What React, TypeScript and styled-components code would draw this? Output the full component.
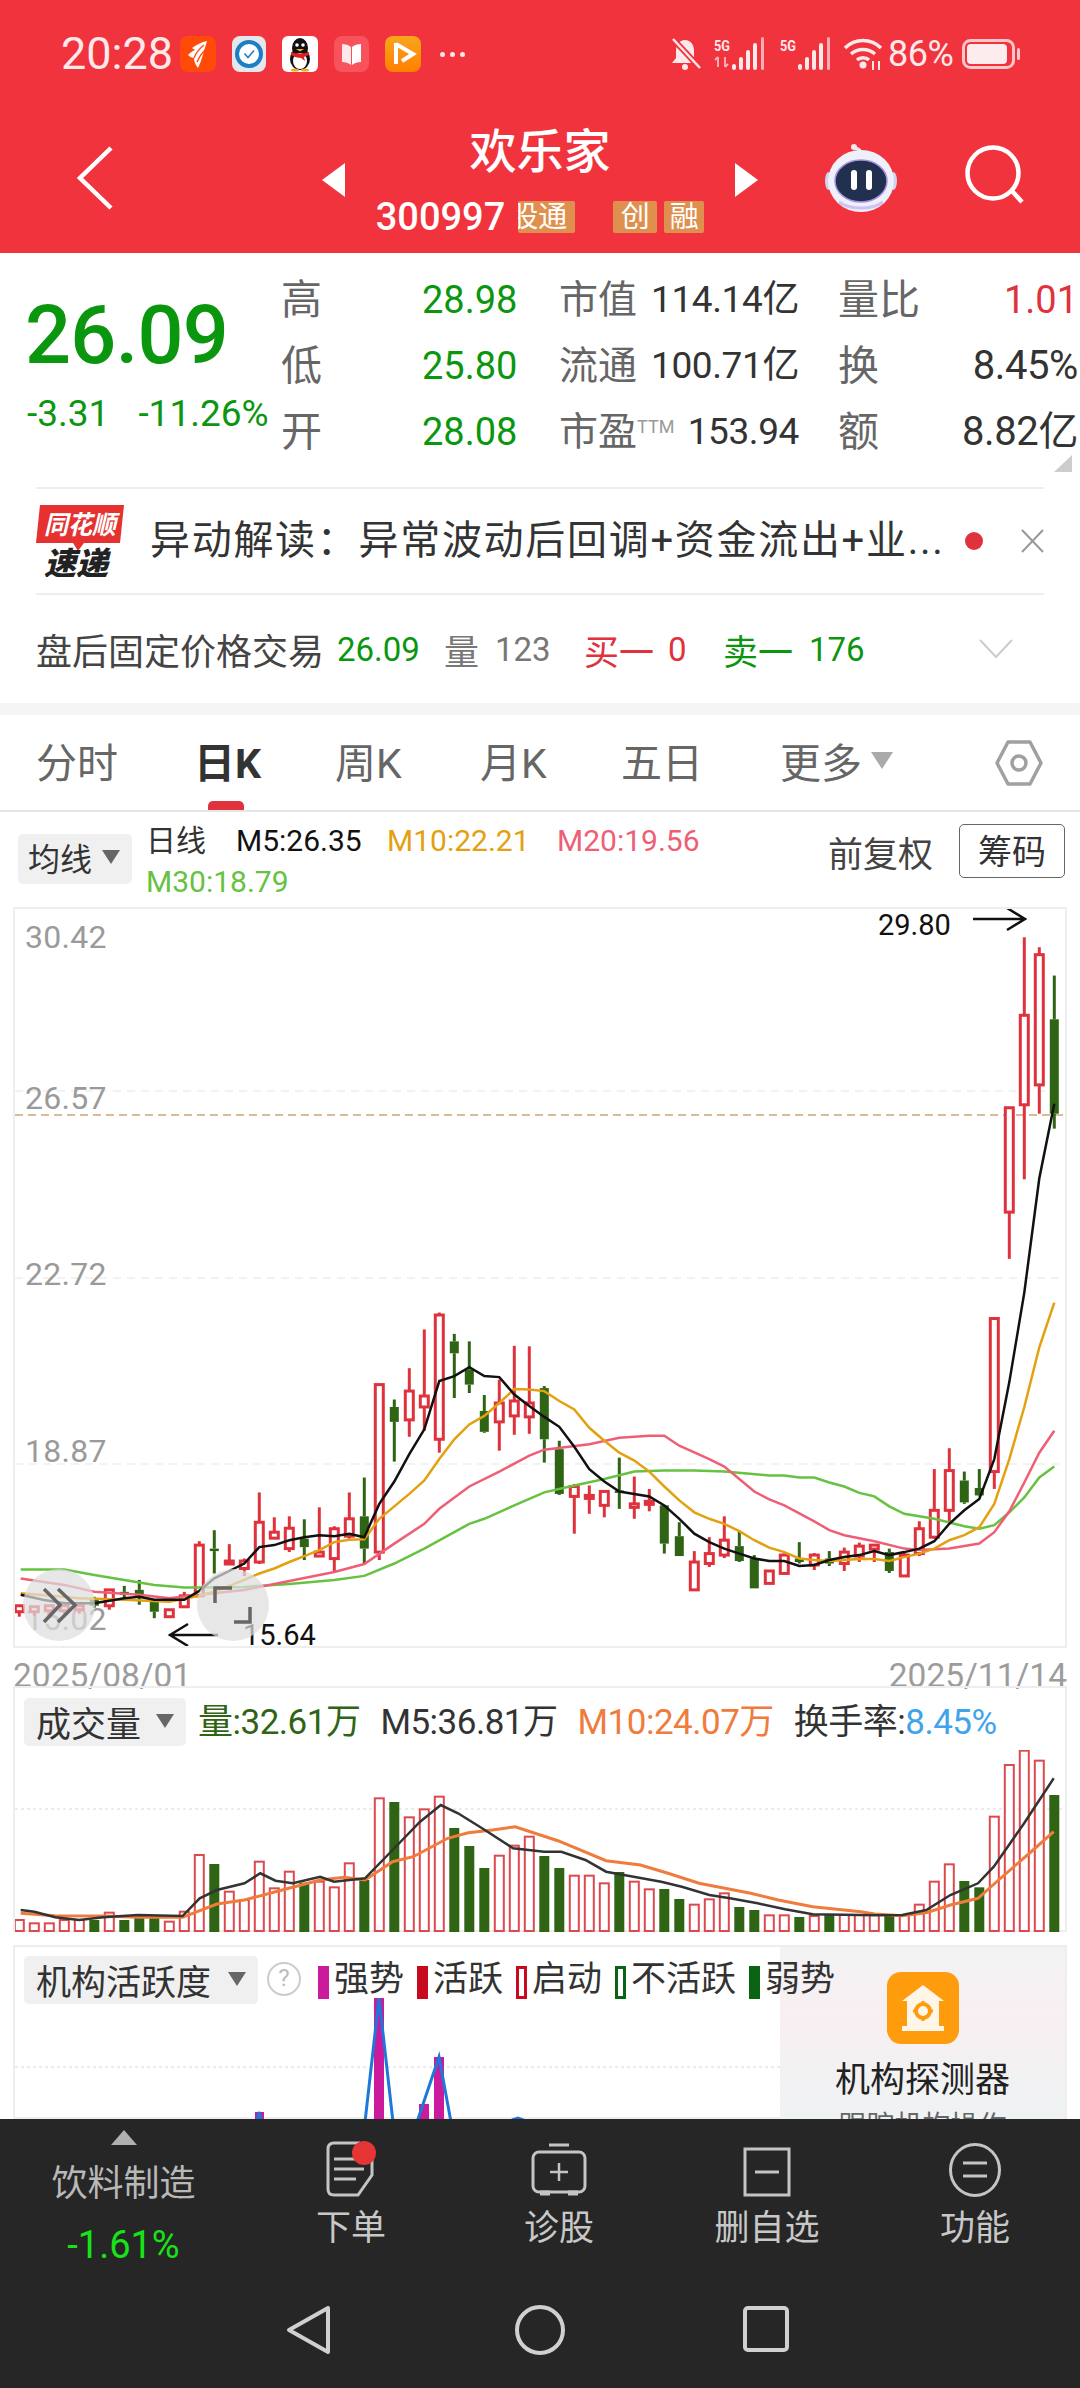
import styled, { createGlobalStyle } from 'styled-components';

const FONT = 'Roboto, "Noto Sans CJK SC", "Noto Sans", sans-serif';
const RED = '#F1333D';
const UP = '#E0323C';
const DOWN = '#0B960F';
const CANDLE_GREEN = '#2F6414';

const GlobalStyle = createGlobalStyle`
    html, body { margin: 0; padding: 0; background: #fff; }
    * { box-sizing: border-box; }
`;

const Page = styled.div`
    width: 1080px;
    height: 2388px;
    overflow: hidden;
    display: flex;
    flex-direction: column;
    font-family: ${FONT};
    background: #fff;
    color: #333;
`;

/* ---------- red header ---------- */
const Header = styled.header`
    height: 253px;
    flex: none;
    background: ${RED};
    color: #fff;
`;

const StatusBar = styled.div`
    height: 108px;
    padding: 36px 0 0 61px;
    display: flex;
    align-items: flex-start;
`;

const Clock = styled.div`
    width: 119px;
    height: 36px;
    font-size: 45px;
    line-height: 36px;
    color: #fde8ea;
`;

const AppIcons = styled.div`
    display: flex;
    gap: 16px;
`;

const MoreDots = styled.div`
    width: 25px;
    margin: 16px 0 0 19px;
    display: flex;
    justify-content: space-between;
    span {
        width: 5px;
        height: 5px;
        border-radius: 50%;
        background: #fde8ea;
    }
`;

const StatusRight = styled.div`
    margin-left: 203px;
    display: flex;
    align-items: center;
    height: 36px;
`;

const Spacer = styled.div<{ $w: number }>`
    width: ${p => p.$w}px;
    flex: none;
`;

const Battery = styled.div`
    font-size: 36px;
    line-height: 36px;
    letter-spacing: -0.5px;
    color: #fde8ea;
    margin: 0 9px 0 5px;
`;

const NavBar = styled.div`
    height: 145px;
    display: grid;
    grid-template-columns: 322px 436px 1fr;
`;

const BackCell = styled.div`
    padding: 38px 0 0 77px;
`;

const Switcher = styled.div`
    display: flex;
    justify-content: space-between;
    align-items: flex-start;
`;

const Arrow = styled.div<{ $dir: 'left' | 'right' }>`
    width: 0;
    height: 0;
    margin-top: 55px;
    border-top: 17px solid transparent;
    border-bottom: 17px solid transparent;
    border-${p => p.$dir === 'left' ? 'right' : 'left'}: 23px solid #fff;
`;

const StockInfo = styled.div`
    display: flex;
    flex-direction: column;
    align-items: center;
`;

const StockName = styled.div`
    height: 90px;
    padding-top: 20px;
    font-size: 47px;
    line-height: 48px;
    font-weight: 500;
`;

const CodeRow = styled.div`
    display: flex;
    align-items: center;
    margin-top: 3px;
    height: 32px;
`;

const Code = styled.div`
    font-size: 38px;
    line-height: 32px;
    font-weight: 500;
    margin-right: 13px;
`;

const Badge = styled.div<{ $w: number; $mr: number }>`
    width: ${p => p.$w}px;
    margin-right: ${p => p.$mr}px;
    height: 32px;
    background: #E0904E;
    border-radius: 2px;
    color: #fff;
    font-size: 29px;
    line-height: 32px;
    display: flex;
    justify-content: center;
    overflow: hidden;
    white-space: nowrap;
`;

// the first character runs off the tag in the app as well
const ClippedBadge = styled(Badge)`
    justify-content: flex-end;
    padding-right: 8px;
    span {
        flex: none;
    }
`;

const NavTools = styled.div`
    padding: 36px 0 0 67px;
    display: flex;
    align-items: flex-start;
    gap: 68px;
`;

/* ---------- quote block ---------- */
const Quote = styled.section`
    position: relative;
    height: 234px;
    flex: none;
    display: flex;
`;

const PriceBlock = styled.div`
    width: 281px;
    flex: none;
    padding: 41px 0 0 25px;
`;

const LastPrice = styled.div`
    font-size: 81px;
    line-height: 84px;
    font-weight: 500;
    color: ${DOWN};
    letter-spacing: -0.7px;
`;

const ChangeRow = styled.div`
    margin-top: 16px;
    padding-left: 2px;
    display: flex;
    gap: 29px;
    font-size: 37px;
    line-height: 40px;
    color: ${DOWN};
    white-space: nowrap;
`;

const QuoteGrid = styled.div`
    margin-top: 14px;
    display: grid;
    grid-template-columns: 141px 137px 279px 242px;
    grid-auto-rows: 66px;
    width: 799px;
    align-items: center;
`;

const QLabel = styled.div`
    font-size: 41px;
    line-height: 48px;
    color: #666;
`;

const QValue = styled.div<{ $color: string }>`
    font-size: 38px;
    line-height: 48px;
    color: ${p => p.$color};
`;

const QPair = styled.div`
    display: flex;
    justify-content: space-between;
    align-items: center;
    padding-right: 39px;
`;

const QShort = styled.div`
    font-size: 39px;
    line-height: 48px;
    color: #666;
    white-space: nowrap;
    sup {
        font-size: 18px;
        color: #999;
        vertical-align: 12px;
        line-height: 0;
    }
`;

const QMid = styled.div`
    font-size: 37px;
    line-height: 48px;
    color: #333;
    letter-spacing: -0.4px;
    white-space: nowrap;
`;

const QBig = styled(QMid)`
    font-size: 40px;
`;

const QEnd = styled(QPair)`
    padding-right: 2px;
`;

const Corner = styled.div`
    position: absolute;
    right: 8px;
    top: 202px;
    width: 0;
    height: 0;
    border-left: 18px solid transparent;
    border-bottom: 17px solid #ccc;
`;

const NewsRow = styled.div`
    height: 108px;
    flex: none;
    margin: 0 36px;
    border-top: 2px solid #eee;
    border-bottom: 2px solid #eee;
    display: flex;
    align-items: center;
`;

const LogoSvg = styled.svg`
    flex: none;
`;

const NewsText = styled.div`
    margin-left: 26px;
    width: 799px;
    flex: none;
    font-size: 40px;
    line-height: 48px;
    color: #333;
    white-space: nowrap;
    letter-spacing: 1.7px;
`;

const NewsDot = styled.div`
    width: 18px;
    height: 18px;
    border-radius: 50%;
    background: ${UP};
    margin-left: 16px;
    flex: none;
`;

const NewsClose = styled.div`
    margin-left: 38px;
    display: flex;
`;

const AfterRow = styled.div`
    height: 108px;
    flex: none;
    padding-left: 36px;
    display: flex;
    align-items: center;
`;

const AfterItem = styled.span<{ $color: string; $w: number; $size?: number }>`
    color: ${p => p.$color};
    width: ${p => p.$w}px;
    font-size: ${p => p.$size ?? 35}px;
    flex: none;
    white-space: nowrap;
`;

const ChevronSvg = styled.svg`
    flex: none;
`;

const Gap = styled.div`
    height: 12px;
    flex: none;
    background: #f5f5f5;
`;

/* ---------- period tabs ---------- */
const Tabs = styled.nav`
    height: 97px;
    flex: none;
    padding-left: 36px;
    border-bottom: 2px solid #e6e6e6;
    display: grid;
    grid-template-columns: 158px 141px 145px 141px 159px 215px 48px;
    align-items: center;
`;

const Tab = styled.div<{ $active?: boolean }>`
    position: relative;
    height: 95px;
    padding-bottom: 5px;
    display: flex;
    align-items: center;
    font-size: 41px;
    gap: 9px;
    color: ${p => (p.$active ? '#333' : '#666')};
    font-weight: ${p => (p.$active ? 700 : 400)};
`;

const TabMark = styled.div`
    position: absolute;
    left: 14px;
    bottom: 0;
    width: 36px;
    height: 9px;
    border-radius: 5px 5px 0 0;
    background: ${UP};
`;

const Caret = styled.div<{ $color: string; $w: number; $h: number }>`
    flex: none;
    width: 0;
    height: 0;
    border-left: ${p => p.$w / 2}px solid transparent;
    border-right: ${p => p.$w / 2}px solid transparent;
    border-top: ${p => p.$h}px solid ${p => p.$color};
`;

/* ---------- k line ---------- */
const Main = styled.main`
    flex: 1;
    min-height: 0;
    overflow: hidden;
`;

const ChartBar = styled.div`
    height: 95px;
    padding: 0 13px 0 18px;
    display: flex;
    align-items: flex-start;
`;

const Pill = styled.div<{ $w: number }>`
    flex: none;
    width: ${p => p.$w}px;
    height: 48px;
    border-radius: 5px;
    background: #f0f0f0;
    padding: 0 12px 2px;
    display: flex;
    align-items: center;
    justify-content: space-between;
    font-size: 35px;
    color: #333;
    white-space: nowrap;
`;

const MaPill = styled(Pill)`
    margin-top: 22px;
    height: 50px;
    font-size: 32px;
    padding-left: 10px;
    padding-bottom: 4px;
`;

const MaValues = styled.div`
    width: 600px;
    margin: 8px 0 0 14px;
    display: flex;
    flex-wrap: wrap;
    font-size: 30px;
    line-height: 41px;
    white-space: nowrap;
`;

const MaText = styled.span<{ $color: string; $w?: number }>`
    color: ${p => p.$color};
    ${p => (p.$w ? `width: ${p.$w}px;` : '')}
`;

const Adjust = styled.div`
    margin: 24px 0 0 82px;
    font-size: 35px;
    line-height: 40px;
    color: #444;
    white-space: nowrap;
`;

const ChipButton = styled.div`
    margin: 12px 0 0 26px;
    width: 106px;
    height: 54px;
    border: 1.5px solid #666;
    border-radius: 5px;
    font-size: 34px;
    line-height: 54px;
    text-align: center;
    color: #333;
`;

const Frame = styled.div<{ $h: number; $mt?: number }>`
    position: relative;
    margin: ${p => p.$mt ?? 0}px 13px 0;
    height: ${p => p.$h}px;
    border: 2px solid #eee;
`;

const PlotSvg = styled.svg`
    display: block;
`;

const Float = styled.div<{ $left: number }>`
    position: absolute;
    left: ${p => p.$left}px;
    top: 660px;
    width: 72px;
    height: 72px;
    border-radius: 50%;
    background: rgba(222, 222, 222, 0.72);
`;

const DateRow = styled.div`
    height: 38px;
    padding: 15px 13px 0;
    display: flex;
    justify-content: space-between;
    align-items: flex-start;
    font-size: 33.5px;
    line-height: 26px;
    color: #9c9c9c;
`;

const VolHead = styled.div`
    height: 62px;
    padding: 10px 0 0 9px;
    display: flex;
    align-items: flex-start;
    gap: 12px;
`;

const VolValues = styled.div`
    margin-top: 3px;
    display: flex;
    gap: 20px;
    font-size: 35px;
    line-height: 44px;
    white-space: nowrap;
    letter-spacing: -0.5px;
`;

const ActivityBody = styled.div`
    display: flex;
    height: 174px;
`;

const ActivityLeft = styled.div`
    width: 765px;
    flex: none;
`;

const ActivityHead = styled.div`
    position: relative;
    z-index: 1;
    height: 51px;
    padding: 9px 0 0 9px;
    display: flex;
    align-items: flex-start;
`;

const Help = styled.div`
    flex: none;
    width: 34px;
    height: 34px;
    margin: 6px 0 0 9px;
    border: 2.5px solid #ccc;
    border-radius: 50%;
    color: #bbb;
    font-size: 24px;
    line-height: 29px;
    text-align: center;
`;

const Legend = styled.div`
    margin-left: 17px;
    display: flex;
    font-size: 35px;
    line-height: 40px;
    white-space: nowrap;
    color: #333;
`;

const LegendItem = styled.div`
    display: flex;
    align-items: center;
    gap: 5px;
    margin-right: 13px;
    height: 48px;
`;

const Swatch = styled.i<{ $color: string; $hollow?: boolean }>`
    display: block;
    width: 11px;
    height: 33px;
    margin-top: 4px;
    background: ${p => (p.$hollow ? '#fff' : p.$color)};
    border: ${p => (p.$hollow ? `3px solid ${p.$color}` : 'none')};
`;

const DetectorCard = styled.aside`
    flex: 1;
    padding-top: 25px;
    display: flex;
    flex-direction: column;
    align-items: center;
    background: linear-gradient(180deg, #f3f3f3 0%, #f8eff1 40%, #eef3f4 100%);
    > * {
        flex: none;
    }
`;

const DetectorTitle = styled.div`
    margin-top: 14px;
    font-size: 35px;
    line-height: 46px;
    color: #222;
`;

const DetectorSub = styled.div`
    margin-top: 7px;
    font-size: 28px;
    line-height: 32px;
    color: #666;
`;

/* ---------- bottom dock ---------- */
const Dock = styled.footer`
    height: 269px;
    flex: none;
    background: #262626;
    color: #c4c4c4;
`;

const DockGrid = styled.div`
    height: 161px;
    display: grid;
    grid-template-columns: 247px repeat(4, 208px);
`;

const SectorCell = styled.div`
    padding-top: 11px;
    display: flex;
    flex-direction: column;
    align-items: center;
`;

const SectorUp = styled.div`
    width: 0;
    height: 0;
    border-left: 13px solid transparent;
    border-right: 13px solid transparent;
    border-bottom: 15px solid #b0b0b0;
`;

const SectorName = styled.div`
    margin-top: 17px;
    font-size: 36px;
    line-height: 44px;
    color: #b8b8b8;
`;

const SectorChange = styled.div`
    margin-top: 17px;
    font-size: 38px;
    line-height: 44px;
    color: #17e417;
`;

const DockItem = styled.div`
    padding-top: 22px;
    display: flex;
    flex-direction: column;
    align-items: center;
`;

const DockIcon = styled.div`
    height: 56px;
    display: flex;
    align-items: flex-end;
`;

const DockLabel = styled.div`
    margin-top: 10px;
    font-size: 35px;
    line-height: 44px;
    color: #c8c8c8;
`;

const SystemNav = styled.div`
    height: 108px;
    padding: 25px 0 0 286px;
    display: flex;
    align-items: flex-start;
`;

/* ---------- data, measured off the chart ---------- */
// [up?, bodyTop, bodyBottom, wickTop, wickBottom]
type Candle = [number, number, number, number, number];
const CANDLES: Candle[] = [
    [1, 1420, 1432, 1420, 1442], [1, 1422, 1432, 1422, 1440], [1, 1420, 1430, 1420, 1438], [1, 1420, 1430, 1420, 1436],
    [1, 1420, 1428, 1420, 1436], [0, 1405, 1420, 1402, 1424], [1, 1388, 1420, 1388, 1428], [0, 1392, 1398, 1380, 1410],
    [0, 1388, 1404, 1368, 1418], [0, 1412, 1432, 1408, 1445], [1, 1428, 1442, 1428, 1442], [1, 1400, 1422, 1392, 1422],
    [1, 1298, 1400, 1290, 1400], [0, 1305, 1310, 1268, 1355], [1, 1330, 1336, 1296, 1336], [1, 1330, 1345, 1325, 1360],
    [1, 1252, 1332, 1192, 1336], [1, 1272, 1284, 1242, 1284], [1, 1264, 1305, 1240, 1312], [0, 1285, 1302, 1246, 1328],
    [1, 1312, 1320, 1222, 1322], [1, 1265, 1325, 1260, 1350], [1, 1245, 1280, 1192, 1285], [0, 1240, 1305, 1162, 1335],
    [1, 975, 1312, 975, 1328], [0, 1020, 1050, 1005, 1130], [1, 988, 1046, 942, 1080], [1, 998, 1020, 864, 1068],
    [1, 835, 1085, 830, 1112], [0, 888, 912, 873, 1002], [0, 945, 975, 888, 992], [0, 1028, 1070, 996, 1072],
    [1, 1012, 1050, 965, 1108], [1, 1008, 1038, 897, 1076], [1, 1012, 1040, 898, 1074], [0, 982, 1085, 978, 1132],
    [0, 1105, 1195, 1088, 1197], [1, 1180, 1200, 1175, 1275], [1, 1198, 1204, 1178, 1235], [1, 1190, 1218, 1190, 1242],
    [0, 1188, 1193, 1122, 1225], [1, 1215, 1222, 1160, 1245], [1, 1210, 1216, 1185, 1230], [0, 1218, 1295, 1218, 1315],
    [0, 1280, 1320, 1252, 1320], [1, 1332, 1388, 1310, 1390], [1, 1315, 1335, 1282, 1342], [1, 1288, 1318, 1240, 1324],
    [0, 1300, 1330, 1270, 1332], [0, 1325, 1385, 1318, 1385], [1, 1350, 1375, 1350, 1375], [1, 1318, 1355, 1315, 1355],
    [0, 1325, 1332, 1292, 1335], [1, 1318, 1338, 1314, 1348], [0, 1325, 1335, 1310, 1340], [1, 1312, 1335, 1303, 1350],
    [1, 1300, 1320, 1293, 1332], [1, 1298, 1306, 1296, 1332], [0, 1312, 1350, 1305, 1354], [1, 1318, 1360, 1310, 1360],
    [1, 1265, 1315, 1250, 1320], [1, 1228, 1282, 1145, 1285], [1, 1148, 1228, 1103, 1250], [0, 1168, 1212, 1150, 1215],
    [0, 1183, 1198, 1145, 1200], [1, 842, 1150, 842, 1185], [1, 418, 628, 418, 722], [1, 232, 412, 75, 562],
    [1, 110, 372, 95, 430], [0, 240, 430, 152, 460],
];

type Pt = [number, number];
// points of the right half were read with an x origin of 520px, shift them over
const right = (pts: Pt[]): Pt[] => pts.map(([x, y]) => [x + 1456, y]);

const MA5: Pt[] = [
    [58, 1398], [120, 1408], [180, 1415], [264, 1415], [348, 1405], [390, 1402], [432, 1408], [516, 1408], [558, 1390],
    [600, 1365], [642, 1350], [684, 1335], [726, 1302], [768, 1298], [810, 1288], [852, 1282], [894, 1278], [936, 1280],
    [978, 1275], [1020, 1282], [1062, 1215], [1104, 1170], [1146, 1115], [1188, 1065], [1230, 968], [1272, 958],
    [1314, 940], [1356, 958], [1398, 960], [1440, 995], [1482, 1018], [1524, 1040],
    ...right([
        [110, 1060], [152, 1100], [194, 1145], [236, 1170], [278, 1190], [320, 1195], [362, 1200], [404, 1218], [446, 1245],
        [488, 1275], [530, 1292], [572, 1305], [614, 1315], [656, 1325], [698, 1330], [740, 1330], [782, 1340], [824, 1338],
        [866, 1328], [908, 1322], [950, 1318], [992, 1310], [1034, 1318], [1076, 1312], [1118, 1305], [1160, 1290],
        [1202, 1255], [1244, 1228], [1286, 1205], [1328, 1125], [1370, 970], [1412, 790], [1454, 560], [1496, 410],
    ]),
];

const MA10: Pt[] = [
    [58, 1395], [222, 1405], [348, 1408], [474, 1412], [558, 1400], [600, 1392], [642, 1380], [684, 1368], [726, 1355],
    [768, 1345], [810, 1332], [852, 1320], [894, 1308], [936, 1292], [978, 1287], [1020, 1286], [1062, 1245], [1104, 1220],
    [1146, 1195], [1188, 1168], [1230, 1125], [1272, 1085], [1314, 1055], [1356, 1038], [1398, 1012], [1440, 984], [1482, 985],
    ...right([
        [68, 988], [110, 1008], [152, 1025], [194, 1062], [236, 1088], [278, 1112], [320, 1128], [362, 1150], [404, 1180],
        [446, 1208], [488, 1232], [530, 1245], [572, 1255], [614, 1270], [656, 1288], [698, 1303], [740, 1312], [782, 1325],
        [824, 1328], [866, 1330], [908, 1328], [950, 1326], [992, 1326], [1034, 1330], [1076, 1322], [1118, 1315], [1160, 1305],
        [1202, 1288], [1244, 1278], [1286, 1262], [1328, 1215], [1370, 1125], [1412, 1020], [1454, 900], [1496, 810],
    ]),
];

const MA20: Pt[] = [
    [58, 1365], [180, 1378], [264, 1392], [390, 1398], [474, 1405], [558, 1398], [684, 1388], [810, 1370], [936, 1352],
    [1020, 1336], [1104, 1295], [1188, 1255], [1230, 1225], [1314, 1180], [1398, 1150], [1482, 1118],
    ...right([
        [68, 1106], [194, 1095], [278, 1082], [362, 1078], [404, 1078], [446, 1098], [530, 1125], [572, 1140], [614, 1165],
        [656, 1190], [698, 1206], [740, 1218], [824, 1250], [866, 1268], [908, 1278], [992, 1290], [1076, 1305], [1118, 1308],
        [1202, 1305], [1286, 1295], [1328, 1272], [1370, 1230], [1412, 1172], [1454, 1112], [1496, 1068],
    ]),
];

const MA30: Pt[] = [
    [58, 1347], [180, 1347], [264, 1358], [348, 1368], [432, 1378], [516, 1383], [558, 1383], [684, 1382], [810, 1376],
    [936, 1368], [1020, 1360], [1104, 1335], [1188, 1305], [1314, 1255], [1356, 1245], [1440, 1218],
    ...right([
        [68, 1192], [152, 1178], [236, 1165], [320, 1150], [404, 1148], [488, 1148], [572, 1150], [698, 1158], [740, 1158],
        [782, 1162], [824, 1162], [866, 1172], [908, 1180], [950, 1193], [992, 1200], [1034, 1220], [1076, 1235], [1160, 1245],
        [1244, 1260], [1286, 1265], [1328, 1258], [1370, 1232], [1412, 1202], [1454, 1162], [1496, 1140],
    ]),
];

// volume tops; colour comes from the candle of the same day
const VOLUME = [
    720, 730, 730, 720, 720, 720, 698, 720, 705, 705, 725, 695, 525, 552, 635, 660, 545, 625, 575, 608, 605, 622, 550, 600,
    355, 366, 412, 388, 350, 444, 498, 564, 527, 497, 470, 528, 564, 587, 587, 610, 576, 605, 628, 627, 657, 674, 658, 640,
    681, 690, 706, 706, 711, 708, 705, 705, 705, 705, 705, 705, 674, 605, 553, 603, 622, 410, 255, 212, 242, 345,
];

const VOL_M5: Pt[] = [
    [30, 690], [50, 695], [80, 712], [115, 720], [150, 712], [200, 705], [265, 708], [290, 655], [315, 630], [355, 610],
    [378, 580], [400, 602], [425, 610], [465, 590], [485, 605], [530, 595], [570, 510], [610, 425], [640, 375], [665, 400],
    [700, 445], [745, 505], [790, 515], [815, 515], [850, 540], [880, 575], [920, 590], [960, 605], [990, 620], [1030, 645],
    [1060, 655], [1100, 670], [1140, 688], [1180, 703], [1270, 706], [1310, 705], [1345, 690], [1380, 645], [1420, 610],
    [1443, 560], [1487, 430], [1530, 295],
];

const VOL_M10: Pt[] = [
    [30, 700], [80, 707], [150, 708], [200, 712], [265, 712], [315, 672], [355, 660], [400, 635], [465, 600], [500, 592],
    [530, 600], [570, 545], [600, 530], [650, 475], [680, 458], [715, 450], [748, 440], [810, 482], [880, 542], [930, 555],
    [970, 580], [1015, 610], [1090, 640], [1130, 660], [1180, 680], [1250, 695], [1270, 702], [1310, 707], [1345, 698],
    [1380, 675], [1420, 655], [1450, 600], [1500, 510], [1530, 455],
];

const kx = (i: number) => 19.3 + 15 * i;
const ky = (z: number) => 900 + z / 2.012;
const vx = (z: number) => z / 1.452;
const vy = (z: number) => 1680 + z / 3;

const kLine = (pts: Pt[]) => pts.map(([x, y]) => `${(x / 2.8).toFixed(1)},${ky(y).toFixed(1)}`).join(' ');
const vLine = (pts: Pt[]) => pts.map(([x, y]) => `${vx(x).toFixed(1)},${vy(y).toFixed(1)}`).join(' ');

const KChart = () => (
    <PlotSvg width={1050} height={737} viewBox="15 909 1050 737">
        {[1091, 1278, 1464].map(y => (
            <line key={y} x1={15} x2={1065} y1={y} y2={y} stroke="#eee" strokeWidth={1.5} strokeDasharray="8 6" />
        ))}
        <line x1={15} x2={1065} y1={1115} y2={1115} stroke="#C8A878" strokeWidth={1.5} strokeDasharray="8 5" />
        {[['30.42', 948], ['26.57', 1109], ['22.72', 1285], ['18.87', 1462], ['15.02', 1630]].map(([t, y]) => (
            <text key={t} x={25} y={y} fontSize={32} fill="#9a9a9a" fontFamily="Roboto, sans-serif" letterSpacing={0.3}>{t}</text>
        ))}
        {CANDLES.map(([up, bt, bb, wt, wb], i) => {
            const x = kx(i);
            const color = up ? '#E0323C' : CANDLE_GREEN;
            return (
                <g key={i}>
                    <line x1={x} x2={x} y1={ky(wt)} y2={ky(bt)} stroke={color} strokeWidth={3} />
                    <line x1={x} x2={x} y1={ky(bb)} y2={ky(wb)} stroke={color} strokeWidth={3} />
                    {up ? (
                        <rect x={x - 4} y={ky(bt)} width={8} height={ky(bb) - ky(bt)} fill="#fff" stroke={color} strokeWidth={3} />
                    ) : (
                        <rect x={x - 4.5} y={ky(bt)} width={9} height={ky(bb) - ky(bt)} fill={color} />
                    )}
                </g>
            );
        })}
        <polyline points={kLine(MA30)} fill="none" stroke="#66C240" strokeWidth={2.5} />
        <polyline points={kLine(MA20)} fill="none" stroke="#EE5F76" strokeWidth={2.5} />
        <polyline points={kLine(MA10)} fill="none" stroke="#E3A010" strokeWidth={2.5} />
        <polyline points={kLine(MA5)} fill="none" stroke="#111" strokeWidth={2.5} />
        <text x={878} y={935} fontSize={29} fill="#111" fontFamily="Roboto, sans-serif">29.80</text>
        <path d="M973 919H1025M1007 908L1025 919L1007 930" fill="none" stroke="#111" strokeWidth={2.5} />
        <text x={243} y={1645} fontSize={29} fill="#111" fontFamily="Roboto, sans-serif">15.64</text>
        <path d="M218 1635H170M188 1624L170 1635L188 1646" fill="none" stroke="#111" strokeWidth={2.5} />
    </PlotSvg>
);

const VolumeChart = () => (
    <PlotSvg width={1050} height={182} viewBox="15 1750 1050 182">
        <line x1={15} x2={1065} y1={1809} y2={1809} stroke="#e6e6e6" strokeWidth={1.5} strokeDasharray="3 3" />
        {VOLUME.map((top, i) => {
            const x = kx(i);
            const y = vy(top);
            return CANDLES[i][0] ? (
                <rect key={i} x={x - 4.5} y={y} width={9} height={1931 - y} fill="#fff" stroke="#DC4A50" strokeWidth={2} />
            ) : (
                <rect key={i} x={x - 5} y={y} width={10} height={1932 - y} fill={CANDLE_GREEN} />
            );
        })}
        <polyline points={vLine(VOL_M10)} fill="none" stroke="#EF7B3C" strokeWidth={3} />
        <polyline points={vLine(VOL_M5)} fill="none" stroke="#333" strokeWidth={2.5} />
    </PlotSvg>
);

const ActivityChart = () => (
    <PlotSvg width={765} height={123} viewBox="15 1998 765 123">
        <line x1={15} x2={780} y1={2067} y2={2067} stroke="#e6e6e6" strokeWidth={1.5} strokeDasharray="3 3" />
        <rect x={255} y={2112} width={9} height={10} fill="#CC1A9C" />
        <rect x={374} y={1998} width={10} height={124} fill="#CC1A9C" />
        <rect x={419} y={2104} width={10} height={18} fill="#CC1A9C" />
        <rect x={434} y={2057} width={10} height={65} fill="#CC1A9C" />
        <polyline points="257,2122 259,2112 262,2122" fill="none" stroke="#1E78DC" strokeWidth={3} />
        <polyline points="365,2122 379,1998 393,2122" fill="none" stroke="#1E78DC" strokeWidth={3} />
        <polyline points="417,2122 439,2057 451,2122" fill="none" stroke="#1E78DC" strokeWidth={3} />
        <polyline points="512,2120 518,2118 526,2121" fill="none" stroke="#1E78DC" strokeWidth={3} />
    </PlotSvg>
);

/* ---------- icons ---------- */
const FeatherApp = () => (
    <svg width={36} height={36} viewBox="0 0 36 36">
        <rect width={36} height={36} rx={8} fill="#FF4A0A" />
        <path d="M27 5C24 14 22 24 18 32C15 28 14 25 14 22C12 22 10 21 8 19C10 17 12 15 15 14C14 13 13 13 12 12C16 9 22 6 27 5z" fill="#fff" />
        <path d="M24 9C20 12 16 17 14 22M25 14C22 17 19 21 17 26" stroke="#FF4A0A" strokeWidth={1.4} fill="none" />
    </svg>
);

const ShieldApp = () => (
    <svg width={34} height={36} viewBox="0 0 34 36">
        <rect width={34} height={36} rx={8} fill="#E4E8EA" />
        <circle cx={17} cy={18} r={12} fill="#fff" stroke="#1A7FC4" strokeWidth={4} />
        <path d="M12.5 17.5l3.5 4 6-7" fill="none" stroke="#1A7FC4" strokeWidth={1.6} />
    </svg>
);

const QqApp = () => (
    <svg width={36} height={36} viewBox="0 0 36 36">
        <rect width={36} height={36} rx={6} fill="#fff" />
        <ellipse cx={18} cy={23} rx={10} ry={11} fill="#111" />
        <ellipse cx={18} cy={12} rx={8} ry={10} fill="#111" />
        <ellipse cx={18} cy={25} rx={7} ry={8} fill="#fff" />
        <circle cx={15} cy={9} r={1.8} fill="#fff" />
        <circle cx={21} cy={9} r={1.8} fill="#fff" />
        <path d="M14 13h8l-4 2.5z" fill="#F5B21A" />
        <path d="M9 16c6 2 12 2 18 0v3c-2 1-4 1-5 2l1 4-4-3c-3 0-7-1-10-3z" fill="#E02020" />
        <ellipse cx={13} cy={34} rx={4} ry={1.6} fill="#F5A81A" />
        <ellipse cx={23} cy={34} rx={4} ry={1.6} fill="#F5A81A" />
    </svg>
);

const BookApp = () => (
    <svg width={35} height={36} viewBox="0 0 35 36">
        <rect width={35} height={36} rx={8} fill="#F8525C" />
        <path d="M8 8c3 0 7 1 9 3v18c-2-2-6-3-9-3z" fill="#fde8ea" />
        <path d="M27 8c-3 0-7 1-9 3v18c2-2 6-3 9-3z" fill="#fff" />
    </svg>
);

const PlayApp = () => (
    <svg width={36} height={36} viewBox="0 0 36 36">
        <defs>
            <linearGradient id="playBg" x1="0" y1="0" x2="0" y2="1">
                <stop offset="0" stopColor="#F9A51E" />
                <stop offset="1" stopColor="#FF7F00" />
            </linearGradient>
        </defs>
        <rect width={36} height={36} rx={8} fill="url(#playBg)" />
        <path d="M11 7v21M11 8l17 10-11 7" fill="none" stroke="#fff" strokeWidth={4} />
    </svg>
);

const MutedBell = () => (
    <svg width={34} height={36} viewBox="0 0 34 36">
        <path d="M17 4c-6 0-9 5-9 11v7l-4 5h26l-4-5v-7c0-6-3-11-9-11z" fill="#fde8ea" />
        <circle cx={17} cy={31} r={3} fill="#fde8ea" />
        <path d="M4 2l28 30" stroke={RED} strokeWidth={6} />
        <path d="M5 3l27 29" stroke="#fde8ea" strokeWidth={2.5} />
    </svg>
);

const Signal = ({ arrows }: { arrows?: boolean }) => (
    <svg width={52} height={34} viewBox="0 0 52 34">
        <text x={0} y={14} fontSize={15} fontWeight={700} fill="#fde8ea" fontFamily="Roboto, sans-serif" textLength={16} lengthAdjust="spacingAndGlyphs">5G</text>
        {arrows && <path d="M4 20v10M1 23l3-3M11 20v10M11 30l3-3" stroke="#f9aeb3" strokeWidth={2} fill="none" />}
        <rect x={18} y={27} width={4} height={6} rx={2} fill="#fde8ea" />
        <rect x={25} y={20} width={4} height={13} rx={2} fill="#fde8ea" />
        <rect x={32} y={13} width={4} height={20} rx={2} fill="#fde8ea" />
        <rect x={39} y={6} width={4} height={27} rx={2} fill="#fde8ea" />
        <rect x={47} y={0} width={3} height={33} rx={1.5} fill="#f9aeb3" />
    </svg>
);

const Wifi = () => (
    <svg width={40} height={34} viewBox="0 0 40 34">
        <path d="M2 11c10-10 26-10 36 0M8 17c7-6 17-6 24 0M14 23c3-3 9-3 12 0" fill="none" stroke="#fde8ea" strokeWidth={3.5} />
        <circle cx={20} cy={28} r={3.5} fill="#fde8ea" />
        <path d="M30 24v9M36 24v9" stroke="#fde8ea" strokeWidth={2} />
    </svg>
);

const BatteryIcon = () => (
    <svg width={58} height={30} viewBox="0 0 58 30">
        <rect x={1.5} y={1.5} width={50} height={27} rx={7} fill="none" stroke="#fbc6ca" strokeWidth={3} />
        <rect x={5} y={5} width={40} height={20} rx={4} fill="#fdeced" />
        <rect x={55} y={9} width={3} height={12} rx={1.5} fill="#fbc6ca" />
    </svg>
);

const BackChevron = () => (
    <svg width={36} height={64} viewBox="0 0 36 64">
        <path d="M34 2L3 32l31 30" fill="none" stroke="#fff" strokeWidth={4.5} />
    </svg>
);

const Robot = () => (
    <svg width={72} height={68} viewBox="0 0 72 68">
        <path d="M36 10c0-4-2-5-6-6" fill="none" stroke="#f2e9f2" strokeWidth={3} />
        <circle cx={29} cy={3} r={3} fill="#f2e9f2" />
        <ellipse cx={3.5} cy={37} rx={3.5} ry={9} fill="#cfd3f0" />
        <ellipse cx={68.5} cy={37} rx={3.5} ry={9} fill="#cfd3f0" />
        <ellipse cx={36} cy={37} rx={33} ry={31} fill="#eef0fa" />
        <path d="M14 58C24 66 48 66 58 58" fill="none" stroke="#cfc4f0" strokeWidth={3} />
        <ellipse cx={36} cy={37} rx={26} ry={21} fill="#22304F" stroke="#a78fe0" strokeWidth={1.5} />
        <rect x={26} y={26} width={6} height={20} rx={3} fill="#fff" />
        <rect x={41} y={26} width={6} height={20} rx={3} fill="#fff" />
    </svg>
);

const SearchIcon = () => (
    <svg width={60} height={60} viewBox="0 0 60 60">
        <circle cx={28} cy={29} r={25.5} fill="none" stroke="#fff" strokeWidth={4.5} />
        <path d="M47 47l10 11" stroke="#fff" strokeWidth={4.5} />
    </svg>
);

const NewsLogo = () => (
    <LogoSvg width={88} height={72} viewBox="0 0 88 72">
        <path d="M4 0H88L84 38H48L42 46L37 38H0z" fill="#E63131" />
        <text x={8} y={29} fontSize={26} fontWeight={700} fontStyle="italic" fill="#fff" fontFamily='"Noto Sans CJK SC", sans-serif' textLength={72} lengthAdjust="spacingAndGlyphs">同花顺</text>
        <text x={8} y={70} fontSize={32} fontWeight={900} fontStyle="italic" fill="#222" fontFamily='"Noto Sans CJK SC", sans-serif'>速递</text>
    </LogoSvg>
);

const CloseIcon = () => (
    <svg width={23} height={24} viewBox="0 0 23 24">
        <path d="M1 1l21 22M22 1L1 23" stroke="#999" strokeWidth={2} />
    </svg>
);

const ChevronDown = () => (
    <ChevronSvg width={34} height={20} viewBox="0 0 34 20">
        <path d="M1 1l16 17L33 1" fill="none" stroke="#ccc" strokeWidth={2} />
    </ChevronSvg>
);

const HexIcon = () => (
    <svg width={48} height={46} viewBox="0 0 48 46">
        <path d="M13 2h22l11 21-11 21H13L2 23z" fill="none" stroke="#a0a0a0" strokeWidth={3.5} strokeLinejoin="round" />
        <circle cx={24} cy={23} r={7} fill="none" stroke="#a0a0a0" strokeWidth={3.5} />
    </svg>
);

const DoubleChevron = () => (
    <svg width={72} height={72} viewBox="0 0 72 72">
        <path d="M21 20L37 36L21 53M35 20L52 36L35 53" fill="none" stroke="#666" strokeWidth={3.5} />
    </svg>
);

const Brackets = () => (
    <svg width={72} height={72} viewBox="0 0 72 72">
        <path d="M18 34V19H35M37 53H53V38" fill="none" stroke="#666" strokeWidth={3.5} />
    </svg>
);

const DetectorIcon = () => (
    <svg width={72} height={72} viewBox="0 0 72 72">
        <rect width={72} height={72} rx={14} fill="#FF9C0E" />
        <path d="M36 13L57 29H52V54H57V59H15V54H20V29H15z" fill="#FFF6E8" />
        <circle cx={36} cy={39} r={7} fill="none" stroke="#FF9C0E" strokeWidth={4} />
        <path d="M36 29v4M36 45v4M26 39h4M42 39h4" stroke="#FF9C0E" strokeWidth={3} />
    </svg>
);

const OrderIcon = () => (
    <svg width={50} height={56} viewBox="0 0 50 56">
        <path d="M34 2H8C4 2 2 4 2 8V48C2 52 4 54 8 54H32L46 34V10" fill="none" stroke="#c4c4c4" strokeWidth={3} />
        <path d="M8 18H32M8 28H38M8 38H30" stroke="#c4c4c4" strokeWidth={3} />
        <circle cx={38} cy={12} r={12} fill="#E63535" />
    </svg>
);

const ClinicIcon = () => (
    <svg width={56} height={54} viewBox="0 0 56 54">
        <path d="M18 2H38" stroke="#c4c4c4" strokeWidth={3} />
        <rect x={2} y={9} width={52} height={40} rx={6} fill="none" stroke="#c4c4c4" strokeWidth={3} />
        <path d="M28 20V38M19 29H37" stroke="#c4c4c4" strokeWidth={2.5} />
        <path d="M9 50H19M37 50H47" stroke="#c4c4c4" strokeWidth={5} />
    </svg>
);

const RemoveIcon = () => (
    <svg width={48} height={50} viewBox="0 0 48 50">
        <rect x={2} y={2} width={44} height={46} fill="none" stroke="#c4c4c4" strokeWidth={3} />
        <path d="M12 25H36" stroke="#c4c4c4" strokeWidth={3} />
    </svg>
);

const MenuIcon = () => (
    <svg width={52} height={54} viewBox="0 0 52 54">
        <ellipse cx={26} cy={27} rx={24.5} ry={25.5} fill="none" stroke="#c4c4c4" strokeWidth={3} />
        <path d="M14 20H38M14 33H38" stroke="#c4c4c4" strokeWidth={3} />
    </svg>
);

const NavBack = () => (
    <svg width={44} height={50} viewBox="0 0 44 50">
        <path d="M42 3V47L3 25z" fill="none" stroke="#d0d0d0" strokeWidth={4} strokeLinejoin="round" />
    </svg>
);

const NavHome = () => (
    <svg width={50} height={50} viewBox="0 0 50 50">
        <circle cx={25} cy={25} r={23} fill="none" stroke="#d0d0d0" strokeWidth={4} />
    </svg>
);

const NavRecent = () => (
    <svg width={46} height={48} viewBox="0 0 46 48">
        <rect x={2} y={3} width={42} height={42} rx={3} fill="none" stroke="#d0d0d0" strokeWidth={4} />
    </svg>
);

const App = () => (
    <Page>
        <GlobalStyle />
        <Header>
            <StatusBar>
                <Clock>20:28</Clock>
                <AppIcons>
                    <FeatherApp />
                    <ShieldApp />
                    <QqApp />
                    <BookApp />
                    <PlayApp />
                </AppIcons>
                <MoreDots>
                    <span />
                    <span />
                    <span />
                </MoreDots>
                <StatusRight>
                    <MutedBell />
                    <Spacer $w={12} />
                    <Signal arrows />
                    <Spacer $w={14} />
                    <Signal />
                    <Spacer $w={11} />
                    <Wifi />
                    <Battery>86%</Battery>
                    <BatteryIcon />
                </StatusRight>
            </StatusBar>
            <NavBar>
                <BackCell>
                    <BackChevron />
                </BackCell>
                <Switcher>
                    <Arrow $dir="left" />
                    <StockInfo>
                        <StockName>欢乐家</StockName>
                        <CodeRow>
                            <Code>300997</Code>
                            <ClippedBadge $w={57} $mr={38}><span>股通</span></ClippedBadge>
                            <Badge $w={44} $mr={7}>创</Badge>
                            <Badge $w={40} $mr={0}>融</Badge>
                        </CodeRow>
                    </StockInfo>
                    <Arrow $dir="right" />
                </Switcher>
                <NavTools>
                    <Robot />
                    <SearchIcon />
                </NavTools>
            </NavBar>
        </Header>

        <Quote>
            <PriceBlock>
                <LastPrice>26.09</LastPrice>
                <ChangeRow>
                    <span>-3.31</span>
                    <span>-11.26%</span>
                </ChangeRow>
            </PriceBlock>
            <QuoteGrid>
                <QLabel>高</QLabel>
                <QValue $color={DOWN}>28.98</QValue>
                <QPair>
                    <QShort>市值</QShort>
                    <QMid>114.14亿</QMid>
                </QPair>
                <QEnd>
                    <QLabel>量比</QLabel>
                    <QValue $color={UP}>1.01</QValue>
                </QEnd>
                <QLabel>低</QLabel>
                <QValue $color={DOWN}>25.80</QValue>
                <QPair>
                    <QShort>流通</QShort>
                    <QMid>100.71亿</QMid>
                </QPair>
                <QEnd>
                    <QLabel>换</QLabel>
                    <QBig>8.45%</QBig>
                </QEnd>
                <QLabel>开</QLabel>
                <QValue $color={DOWN}>28.08</QValue>
                <QPair>
                    <QShort>市盈<sup>TTM</sup></QShort>
                    <QMid>153.94</QMid>
                </QPair>
                <QEnd>
                    <QLabel>额</QLabel>
                    <QBig>8.82亿</QBig>
                </QEnd>
            </QuoteGrid>
            <Corner />
        </Quote>

        <NewsRow>
            <NewsLogo />
            <NewsText>异动解读：异常波动后回调+资金流出+业...</NewsText>
            <NewsDot />
            <NewsClose>
                <CloseIcon />
            </NewsClose>
        </NewsRow>

        <AfterRow>
            <AfterItem $color="#444" $w={301} $size={36}>盘后固定价格交易</AfterItem>
            <AfterItem $color={DOWN} $w={107} $size={33}>26.09</AfterItem>
            <AfterItem $color="#777" $w={51}>量</AfterItem>
            <AfterItem $color="#777" $w={89} $size={33}>123</AfterItem>
            <AfterItem $color={UP} $w={84}>买一</AfterItem>
            <AfterItem $color={UP} $w={55} $size={33}>0</AfterItem>
            <AfterItem $color={DOWN} $w={86}>卖一</AfterItem>
            <AfterItem $color={DOWN} $w={170} $size={33}>176</AfterItem>
            <ChevronDown />
        </AfterRow>
        <Gap />

        <Tabs>
            <Tab>分时</Tab>
            <Tab $active>
                日K
                <TabMark />
            </Tab>
            <Tab>周K</Tab>
            <Tab>月K</Tab>
            <Tab>五日</Tab>
            <Tab>
                更多
                <Caret $color="#aaa" $w={22} $h={17} />
            </Tab>
            <HexIcon />
        </Tabs>

        <Main>
            <ChartBar>
                <MaPill $w={114}>
                    均线
                    <Caret $color="#666" $w={18} $h={14} />
                </MaPill>
                <MaValues>
                    <MaText $color="#333" $w={90}>日线</MaText>
                    <MaText $color="#111" $w={151}>M5:26.35</MaText>
                    <MaText $color="#E3A010" $w={170}>M10:22.21</MaText>
                    <MaText $color="#EE5F76" $w={160}>M20:19.56</MaText>
                    <MaText $color="#66C240">M30:18.79</MaText>
                </MaValues>
                <Adjust>前复权</Adjust>
                <ChipButton>筹码</ChipButton>
            </ChartBar>

            <Frame $h={741}>
                <KChart />
                <Float $left={8}>
                    <DoubleChevron />
                </Float>
                <Float $left={182}>
                    <Brackets />
                </Float>
            </Frame>
            <DateRow>
                <span>2025/08/01</span>
                <span>2025/11/14</span>
            </DateRow>

            <Frame $h={246}>
                <VolHead>
                    <Pill $w={162}>
                        成交量
                        <Caret $color="#666" $w={18} $h={14} />
                    </Pill>
                    <VolValues>
                        <MaText $color={CANDLE_GREEN}>量:32.61万</MaText>
                        <MaText $color="#333">M5:36.81万</MaText>
                        <MaText $color="#EF7B3C">M10:24.07万</MaText>
                        <MaText $color="#333">换手率:<MaText $color="#3FA4EA">8.45%</MaText></MaText>
                    </VolValues>
                </VolHead>
                <VolumeChart />
            </Frame>

            <Frame $h={174} $mt={13}>
                <ActivityBody>
                    <ActivityLeft>
                        <ActivityHead>
                            <Pill $w={234}>
                                机构活跃度
                                <Caret $color="#666" $w={18} $h={14} />
                            </Pill>
                            <Help>?</Help>
                            <Legend>
                                <LegendItem><Swatch $color="#CC1A9C" />强势</LegendItem>
                                <LegendItem><Swatch $color="#C80A1E" />活跃</LegendItem>
                                <LegendItem><Swatch $color="#C80A1E" $hollow />启动</LegendItem>
                                <LegendItem><Swatch $color="#0A6414" $hollow />不活跃</LegendItem>
                                <LegendItem><Swatch $color="#0A6414" />弱势</LegendItem>
                            </Legend>
                        </ActivityHead>
                        <ActivityChart />
                    </ActivityLeft>
                    <DetectorCard>
                        <DetectorIcon />
                        <DetectorTitle>机构探测器</DetectorTitle>
                        <DetectorSub>跟踪机构操作</DetectorSub>
                    </DetectorCard>
                </ActivityBody>
            </Frame>
        </Main>

        <Dock>
            <DockGrid>
                <SectorCell>
                    <SectorUp />
                    <SectorName>饮料制造</SectorName>
                    <SectorChange>-1.61%</SectorChange>
                </SectorCell>
                <DockItem>
                    <DockIcon><OrderIcon /></DockIcon>
                    <DockLabel>下单</DockLabel>
                </DockItem>
                <DockItem>
                    <DockIcon><ClinicIcon /></DockIcon>
                    <DockLabel>诊股</DockLabel>
                </DockItem>
                <DockItem>
                    <DockIcon><RemoveIcon /></DockIcon>
                    <DockLabel>删自选</DockLabel>
                </DockItem>
                <DockItem>
                    <DockIcon><MenuIcon /></DockIcon>
                    <DockLabel>功能</DockLabel>
                </DockItem>
            </DockGrid>
            <SystemNav>
                <NavBack />
                <Spacer $w={185} />
                <NavHome />
                <Spacer $w={178} />
                <NavRecent />
            </SystemNav>
        </Dock>
    </Page>
);

export default App;
